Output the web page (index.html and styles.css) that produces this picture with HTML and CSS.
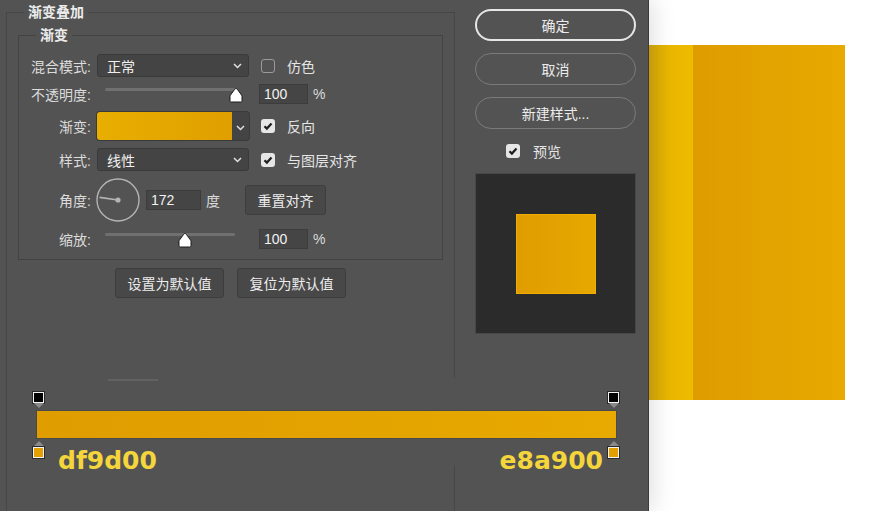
FILE: index.html
```html
<!DOCTYPE html>
<html>
<head>
  <title>图层样式 - 渐变叠加</title>
  <link rel="stylesheet" href="styles.css">
</head>
<body>
  <div class="window">
    <div class="panel">
      <div class="main-col">
        <fieldset class="group outer">
          <legend>渐变叠加</legend>
          <fieldset class="group inner">
            <legend>渐变</legend>

            <div class="row row-select">
              <span class="label">混合模式:</span>
              <div class="select">
                <span>正常</span>
                <svg class="chevron" width="9" height="6" viewBox="0 0 9 6"><path d="M1 1l3.5 3.5L8 1" fill="none" stroke="#e0e0e0" stroke-width="1.5"/></svg>
              </div>
              <span class="check"></span>
              <span class="check-text">仿色</span>
            </div>

            <div class="row row-slider">
              <span class="label">不透明度:</span>
              <div class="slider">
                <div class="track">
                  <svg class="thumb" style="left: 124px" width="14" height="16" viewBox="0 0 14 16"><path d="M7 1.5c.6 0 1 .4 1.4.9l4.1 5.6c.3.4.5.9.5 1.5v4c0 .8-.6 1.5-1.5 1.5h-9c-.9 0-1.5-.7-1.5-1.5v-4c0-.6.2-1.1.5-1.5l4.1-5.6c.4-.5.8-.9 1.4-.9z" fill="#fff" stroke="#1b1b1b" stroke-width="1"/></svg>
                </div>
              </div>
              <span class="input num">100</span>
              <span class="unit">%</span>
            </div>

            <div class="row row-gradient">
              <span class="label">渐变:</span>
              <div class="gradient-pick">
                <div class="gradient-swatch"></div>
                <div class="gradient-drop">
                  <svg class="chevron" width="9" height="6" viewBox="0 0 9 6"><path d="M1 1l3.5 3.5L8 1" fill="none" stroke="#e0e0e0" stroke-width="1.5"/></svg>
                </div>
              </div>
              <span class="check on">
                <svg width="14" height="14" viewBox="0 0 14 14"><path d="M3.5 7.2l2.4 2.4 4.6-5" fill="none" stroke="#1e1e1e" stroke-width="2.2"/></svg>
              </span>
              <span class="check-text">反向</span>
            </div>

            <div class="row row-select">
              <span class="label">样式:</span>
              <div class="select">
                <span>线性</span>
                <svg class="chevron" width="9" height="6" viewBox="0 0 9 6"><path d="M1 1l3.5 3.5L8 1" fill="none" stroke="#e0e0e0" stroke-width="1.5"/></svg>
              </div>
              <span class="check on">
                <svg width="14" height="14" viewBox="0 0 14 14"><path d="M3.5 7.2l2.4 2.4 4.6-5" fill="none" stroke="#1e1e1e" stroke-width="2.2"/></svg>
              </span>
              <span class="check-text">与图层对齐</span>
            </div>

            <div class="row row-angle">
              <span class="label">角度:</span>
              <svg class="dial" width="44" height="44" viewBox="0 0 44 44">
                <circle cx="22" cy="22" r="21" fill="none" stroke="#b4b4b4" stroke-width="1.4"/>
                <line x1="22" y1="22" x2="3.5" y2="19.4" stroke="#b4b4b4" stroke-width="1.6"/>
                <circle cx="22" cy="22" r="2.6" fill="#b4b4b4"/>
              </svg>
              <span class="input angle">172</span>
              <span class="unit">度</span>
              <button class="btn realign">重置对齐</button>
            </div>

            <div class="row row-slider">
              <span class="label">缩放:</span>
              <div class="slider">
                <div class="track short">
                  <svg class="thumb" style="left: 73px" width="14" height="16" viewBox="0 0 14 16"><path d="M7 1.5c.6 0 1 .4 1.4.9l4.1 5.6c.3.4.5.9.5 1.5v4c0 .8-.6 1.5-1.5 1.5h-9c-.9 0-1.5-.7-1.5-1.5v-4c0-.6.2-1.1.5-1.5l4.1-5.6c.4-.5.8-.9 1.4-.9z" fill="#fff" stroke="#1b1b1b" stroke-width="1"/></svg>
                </div>
              </div>
              <span class="input num">100</span>
              <span class="unit">%</span>
            </div>
          </fieldset>

          <div class="defaults">
            <button class="btn">设置为默认值</button>
            <button class="btn">复位为默认值</button>
          </div>
        </fieldset>
      </div>

      <div class="side-col">
        <div class="actions">
          <button class="pill primary">确定</button>
          <button class="pill">取消</button>
          <button class="pill">新建样式...</button>
        </div>
        <div class="preview-toggle">
          <span class="check on">
            <svg width="14" height="14" viewBox="0 0 14 14"><path d="M3.5 7.2l2.4 2.4 4.6-5" fill="none" stroke="#1e1e1e" stroke-width="2.2"/></svg>
          </span>
          <span class="check-text">预览</span>
        </div>
        <div class="preview-box">
          <div class="preview-square"></div>
        </div>
      </div>

      <!-- gradient editor strip laid over the dialog -->
      <div class="stops-overlay">
        <div class="overlay-rule"></div>
        <div class="ramp">
          <div class="stop stop-top left"><span class="stop-box black"></span><span class="tri down"></span></div>
          <div class="stop stop-top right"><span class="stop-box black"></span><span class="tri down"></span></div>
          <div class="stop stop-bottom left"><span class="tri up"></span><span class="stop-box gold"></span></div>
          <div class="stop stop-bottom right"><span class="tri up"></span><span class="stop-box gold"></span></div>
        </div>
        <div class="hex-labels">
          <span>df9d00</span>
          <span>e8a900</span>
        </div>
      </div>
    </div>

    <div class="canvas">
      <div class="swatch">
        <div class="swatch-edge"></div>
        <div class="swatch-fill"></div>
      </div>
    </div>
  </div>
</body>
</html>
```

FILE: styles.css
```css
body {
  margin: 0;
  padding: 0;
  background: #fff;
  font-family: "Liberation Sans", "Noto Sans CJK SC", sans-serif;
  font-size: 14px;
  color: #e4e4e4;
}

.window {
  display: flex;
  width: 870px;
  height: 511px;
  overflow: hidden;
}

.panel {
  position: relative;
  z-index: 1;
  display: flex;
  width: 648px;
  height: 511px;
  flex-shrink: 0;
  background-color: #535353;
  border-right: 1px solid #3b3b3b;
  box-shadow: 4px 0 22px rgba(0,0,0,0.13);
  overflow: hidden;
}

/* group boxes */
.group {
  margin: 0;
  min-width: 0;
  border: 1px solid #464646;
}

.group legend {
  padding: 0 4px;
  line-height: 20px;
  font-weight: bold;
  color: #ececec;
}

.outer {
  box-sizing: border-box;
  width: 449px;
  height: 540px;
  margin: 2px 0 0 6px;
  padding: 3px 11px 0 11px;
}

.outer > legend {
  margin-left: 6px;
}

.inner {
  padding: 9px 0 10px 0;
  border-color: #434343;
}

.inner > legend {
  margin-left: 17px;
}

/* form rows */
.row {
  display: flex;
  align-items: center;
  margin-bottom: 7px;
}

.row:last-child {
  margin-bottom: 0;
}

.row-select { height: 23px; }
.row-slider { height: 20px; }
.row-gradient { height: 30px; }
.row-angle { height: 44px; }

.label {
  width: 72px;
  flex-shrink: 0;
  text-align: right;
  color: #dcdcdc;
}

.select {
  box-sizing: border-box;
  display: flex;
  align-items: center;
  justify-content: space-between;
  width: 152px;
  height: 23px;
  margin-left: 6px;
  padding: 0 6px 0 9px;
  background-color: #444;
  border: 1px solid #3a3a3a;
  border-radius: 3px;
  color: #f0f0f0;
}

.check {
  box-sizing: border-box;
  display: flex;
  width: 14px;
  height: 14px;
  margin-left: 12px;
  border: 1.5px solid #9a9a9a;
  border-radius: 3px;
}

.check.on {
  border: none;
  background-color: #e6e6e6;
}

.check-text {
  margin-left: 12px;
  color: #e6e6e6;
}

.slider {
  box-sizing: border-box;
  align-self: stretch;
  width: 152px;
  margin-left: 6px;
  padding: 4px 0 0 8px;
}

.track {
  position: relative;
  width: 131px;
  height: 3px;
  background-color: #707070;
  border-radius: 2px;
}

.track.short {
  width: 130px;
}

.thumb {
  position: absolute;
  top: -1px;
}

.input {
  box-sizing: border-box;
  height: 20px;
  padding-left: 4px;
  line-height: 18px;
  background-color: #454545;
  border: 1px solid #3c3c3c;
  color: #f2f2f2;
}

.input.num {
  width: 49px;
  margin-left: 10px;
}

.input.angle {
  width: 55px;
  margin-left: 6px;
}

.unit {
  margin-left: 5px;
  color: #dcdcdc;
}

.gradient-pick {
  display: flex;
  width: 152px;
  height: 28px;
  margin-left: 6px;
  border-radius: 3px;
  background-color: #444;
  box-shadow: 0 0 0 1px #3a3a3a;
}

.gradient-swatch {
  width: 135px;
  background: linear-gradient(to right, #e8ae00, #e09f00);
  border-radius: 3px 0 0 3px;
}

.gradient-drop {
  flex: 1;
  display: flex;
  align-items: center;
  justify-content: center;
  padding-top: 4px;
}

.dial {
  margin-left: 5px;
}

.btn {
  box-sizing: border-box;
  height: 30px;
  padding: 0;
  font-family: inherit;
  font-size: 14px;
  color: #ececec;
  background-color: #484848;
  border: 1px solid #3d3d3d;
  border-radius: 3px;
}

.realign {
  width: 81px;
  margin-left: 25px;
}

.defaults {
  display: flex;
  justify-content: center;
  gap: 13px;
  margin-top: 8px;
}

.defaults .btn {
  width: 109px;
}

/* right column */
.side-col {
  width: 161px;
  margin-left: 20px;
}

.actions {
  display: flex;
  flex-direction: column;
  gap: 12px;
  margin-top: 9px;
}

.pill {
  box-sizing: border-box;
  height: 32px;
  font-family: inherit;
  font-size: 14px;
  color: #ececec;
  background: transparent;
  border: 1.5px solid #7a7a7a;
  border-radius: 16px;
}

.pill.primary {
  border: 2px solid #e6e6e6;
}

.preview-toggle {
  display: flex;
  align-items: center;
  height: 20px;
  margin-top: 12px;
  padding-left: 19px;
}

.preview-toggle .check-text {
  margin-left: 13px;
}

.preview-box {
  box-sizing: border-box;
  display: flex;
  align-items: center;
  justify-content: center;
  width: 161px;
  height: 161px;
  margin-top: 12px;
  background-color: #2b2b2b;
  border: 1px solid #474747;
}

.preview-square {
  width: 80px;
  height: 80px;
  box-sizing: border-box;
  background: linear-gradient(to right, #e09d00, #e6a800);
  border: 1px solid #f0ae00;
}

/* gradient stops overlay */
.stops-overlay {
  position: absolute;
  left: 20px;
  top: 378px;
  width: 622px;
  height: 87px;
  background-color: #535353;
}

.overlay-rule {
  width: 50px;
  height: 2px;
  margin: 1px 0 0 88px;
  background-color: #626262;
}

.ramp {
  position: relative;
  width: 579px;
  height: 27px;
  margin: 30px 0 0 17px;
  background: linear-gradient(to right, #df9d00, #e8a900);
  box-shadow: 0 0 0 1px #4a4a4a;
}

.stop {
  position: absolute;
  display: flex;
  flex-direction: column;
  align-items: center;
  width: 11px;
}

.stop-top { top: -19px; }
.stop-bottom { top: 30px; }
.stop.left { left: -4px; }
.stop.right { right: -3px; }

.stop-box {
  box-sizing: border-box;
  width: 11px;
  height: 11px;
  border: 1.5px solid #f2f2f2;
  outline: 1px solid #2a2a2a;
}

.stop-box.black { background-color: #000; }
.stop-box.gold { background-color: #e3a000; }

.tri {
  width: 0;
  height: 0;
  border-left: 5px solid transparent;
  border-right: 5px solid transparent;
}

.tri.down { border-top: 5px solid #8a8a8a; }
.tri.up {
  border-bottom: 5px solid #8a8a8a;
  margin-bottom: 1px;
}

.hex-labels {
  display: flex;
  justify-content: space-between;
  width: 579px;
  box-sizing: border-box;
  margin: 10px 0 0 17px;
  padding: 0 13px 0 21px;
  font-family: "DejaVu Sans", sans-serif;
  font-weight: bold;
  font-size: 25px;
  line-height: 25px;
  color: #f4d63c;
}

/* document canvas */
.canvas {
  flex: 1;
  padding-top: 45px;
  background-color: #fff;
}

.swatch {
  display: flex;
  width: 196px;
  height: 355px;
}

.swatch-edge {
  width: 44px;
  background: linear-gradient(to right, #d6a90c, #e9b700 45%, #eebb00);
}

.swatch-fill {
  flex: 1;
  background: linear-gradient(to right, #df9c00, #e3a300 50%, #e8a900);
}
```
